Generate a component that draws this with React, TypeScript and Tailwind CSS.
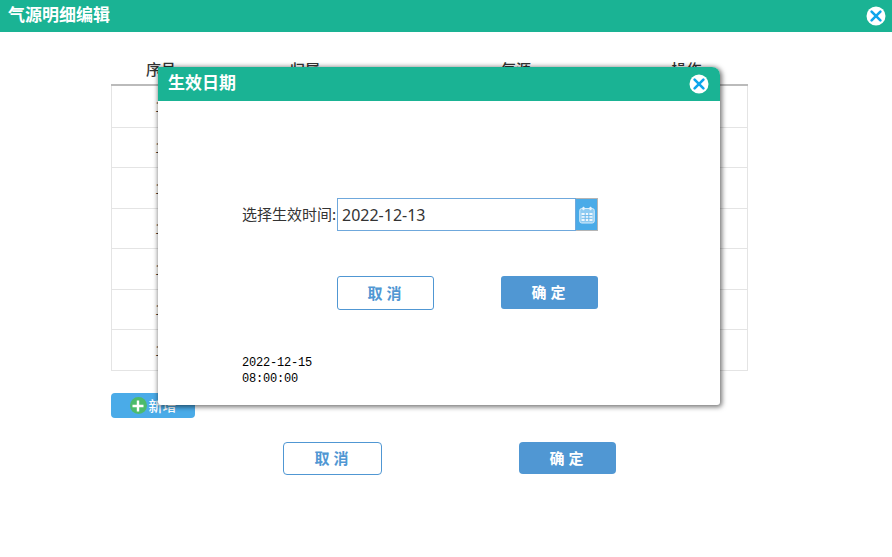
import React from "react";

const cjk = { fontFamily: '"Noto Sans CJK SC", "Noto Sans", sans-serif' };

function CloseIcon() {
  return (
    <svg width="20" height="20" viewBox="0 0 20 20" className="block">
      <circle cx="10" cy="10" r="9.5" fill="#ffffff" />
      <path d="M5.6 5.6 L14.4 14.4 M14.4 5.6 L5.6 14.4" stroke="#0ea5ec" strokeWidth="2.6" strokeLinecap="round" />
    </svg>
  );
}

function CalendarIcon() {
  return (
    <svg width="16" height="18" viewBox="0 0 16 18" className="block">
      <rect x="0.75" y="2.5" width="14.5" height="14.5" rx="2" fill="#8ecbf2" stroke="#d8ecfa" />
      <rect x="3.5" y="0.8" width="2" height="3.4" rx="0.8" fill="#e6f3fc" />
      <rect x="10.5" y="0.8" width="2" height="3.4" rx="0.8" fill="#e6f3fc" />
      <path d="M2.5 7h11v8h-11z" fill="#eef7fd" />
      <path d="M2.5 9.6h11M2.5 12.3h11M6.2 7v8M9.8 7v8" stroke="#6db9ec" strokeWidth="1" />
    </svg>
  );
}

const rows = [42, 40, 41, 40, 41, 40, 41];

export default function App() {
  return (
    <div className="relative w-[892px] h-[557px] bg-white overflow-hidden text-[#333333]" style={cjk}>
      <header className="h-8 bg-[#1ab394] flex items-center justify-between pl-2 pr-[6px]">
        <span className="text-[17px] font-bold text-white -mt-[4px]">气源明细编辑</span>
        <CloseIcon />
      </header>

      <main className="ml-[111px] w-[637px] pt-[23px]">
        <div className="grid grid-cols-[100px_188px_234px_115px] h-[31px] items-center text-center text-[15px] font-medium text-[#333333] border-b-2 border-[#bbbbbb]">
          <span>序号</span>
          <span>归属</span>
          <span>气源</span>
          <span className="-ml-[8px]">操作</span>
        </div>
        <div className="border-x border-[#e4e4e4]">
          {rows.map((h, i) => (
            <div key={i} className={`border-b border-[#e4e4e4] text-[14px] flex items-center pl-[43px] ${h === 42 ? "h-[42px]" : h === 41 ? "h-[41px]" : "h-[40px]"}`}>
              <span>{10 + i}</span>
            </div>
          ))}
        </div>
        <button className="mt-[22px] w-[84px] h-[25px] rounded bg-[#4aabe8] flex items-center justify-center gap-[2px] text-white text-[14px] font-medium">
          <span className="w-[17px] h-[17px] rounded-full bg-[#4cbb6c] flex items-center justify-center">
            <svg width="12" height="12" viewBox="0 0 12 12"><path d="M6 0.5v11M0.5 6h11" stroke="#fff" strokeWidth="2.4" /></svg>
          </span>
          新增
        </button>
        <div className="mt-[24px] pl-[172px] flex items-start">
          <button className="w-[99px] h-[33px] pl-[2px] rounded border border-[#5097d3] bg-white text-[#5097d3] text-[15px] font-bold tracking-[4px]">取消</button>
          <button className="ml-[137px] w-[97px] h-[32px] pl-[2px] rounded bg-[#5097d3] text-white text-[15px] font-bold tracking-[4px]">确定</button>
        </div>
      </main>

      <section className="absolute left-[158px] top-[67px] w-[562px] h-[338px] rounded-tr-lg rounded-b-[3px] bg-white shadow-[1px_1px_5px_1px_rgba(0,0,0,0.55)] flex flex-col">
        <div className="h-[34px] bg-[#1ab394] rounded-tr-lg flex items-center justify-between pl-[10px] pr-[11px]">
          <span className="text-[17px] font-bold text-white -mt-[4px]">生效日期</span>
          <CloseIcon />
        </div>
        <div className="pl-[84px] pt-[97px] flex flex-col">
          <div className="flex items-center h-[33px]">
            <span className="w-[95px] text-[15px] whitespace-nowrap">选择生效时间:</span>
            <div className="w-[239px] h-[33px] border border-[#6fa8dc] pl-1 flex items-center text-[16px] text-[#333333]" style={{ fontFamily: '"Noto Sans", sans-serif' }}>
              2022-12-13
            </div>
            <div className="w-[22px] h-[33px] bg-[#4aabe8] border border-[#b5b5b5] border-l-0 flex items-center justify-center">
              <CalendarIcon />
            </div>
          </div>
          <div className="mt-[45px] ml-[95px] flex items-start">
            <button className="w-[97px] h-[34px] pl-[2px] rounded-[3px] border border-[#5097d3] bg-white text-[#5097d3] text-[15px] font-bold tracking-[4px]">取消</button>
            <button className="ml-[67px] w-[97px] h-[33px] pl-[2px] rounded-[3px] bg-[#5097d3] text-white text-[15px] font-bold tracking-[4px]">确定</button>
          </div>
          <div className="mt-[45px] w-[80px] text-[12px] leading-4 text-black tracking-[-0.2px]" style={{ fontFamily: '"Liberation Mono", monospace' }}>
            2022-12-15 08:00:00
          </div>
        </div>
      </section>
    </div>
  );
}
